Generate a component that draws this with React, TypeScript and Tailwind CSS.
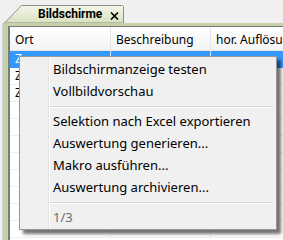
import React from "react";

const font = { fontFamily: '"Noto Sans", "Open Sans", sans-serif' };

const rows = ["Z", "Z", "Z", "", "", "", "", "", "", "", ""];

function Tab() {
  return (
    <div className="relative w-[120px] h-[18px]">
      <svg className="absolute inset-0" width="120" height="18" viewBox="0 0 120 18">
        <defs>
          <linearGradient id="tg" x1="0" y1="0" x2="0" y2="1">
            <stop offset="0" stopColor="#f3f6ea" />
            <stop offset="1" stopColor="#d8e2bf" />
          </linearGradient>
        </defs>
        <path d="M0.5 18 L17.5 0.5 L118.5 0.5 L119.5 1.5 L119.5 18 Z" fill="url(#tg)" stroke="#8f8f8f" strokeWidth="1" />
      </svg>
      <div className="relative flex items-center h-full pl-[34px]">
        <span
          className="w-[72px] text-[12px] font-bold text-black leading-none whitespace-nowrap"
          style={{ fontFamily: 'Roboto, "Noto Sans", sans-serif' }}
        >
          Bildschirme
        </span>
        <svg width="9" height="8" viewBox="0 0 9 8" className="mt-[3px]">
          <path d="M1 0.5 L8 7.5 M8 0.5 L1 7.5" stroke="#000" strokeWidth="1.6" />
        </svg>
      </div>
    </div>
  );
}

function MenuItem({ label, gray }: { label: string; gray?: boolean }) {
  return (
    <div className={`h-[22px] flex items-center pl-[3px] text-[13px] whitespace-nowrap ${gray ? "text-[#6d6d6d]" : "text-black"}`}>
      {label}
    </div>
  );
}

function Sep() {
  return (
    <div className="h-[8px] flex flex-col justify-center mr-[3px]">
      <div className="h-px bg-[#d7d7d7]" />
      <div className="h-px bg-white" />
    </div>
  );
}

export default function App() {
  return (
    <div className="relative w-[283px] h-[240px] bg-[#f0f0f0] overflow-hidden" style={font}>
      <div className="h-[23px] flex items-end pl-[4px]">
        <Tab />
      </div>
      <div className="flex h-[217px]">
        <div className="w-[2px]" />
        <div className="w-px bg-[#cdd3e4]" />
        <div className="flex-1 min-w-0 bg-[#c6d3a6] pt-[3px] pl-[5px] flex flex-col">
          <div className="flex-1 bg-white border-t border-l-2 border-[#7a7a7a] flex flex-col">
            <div className="h-[24px] flex border-b border-[#e5e5e5] bg-gradient-to-b from-white to-[#f4f4f4] text-[12px] text-black">
              <div className="w-[101px] shrink-0 border-r border-[#e5e5e5] pl-[5px] pt-[3px] flex items-center">Ort</div>
              <div className="w-[100px] shrink-0 border-r border-[#e5e5e5] pl-[5px] pt-[3px] flex items-center">Beschreibung</div>
              <div className="pl-[5px] pt-[3px] flex items-center whitespace-nowrap">hor. Auflösung</div>
            </div>
            {rows.map((r, i) => (
              <div
                key={i}
                className={`h-[17px] flex border-b text-[12px] ${
                  i === 0 ? "bg-[#3399ff] text-white border-[#3399ff]" : "text-black border-[#efefef]"
                }`}
              >
                <div className={`w-[101px] shrink-0 border-r pl-[5px] flex items-center ${i === 0 ? "border-[#cfe4ff]" : "border-[#efefef]"}`}>{r}</div>
                <div className={`w-[100px] shrink-0 border-r ${i === 0 ? "border-[#cfe4ff]" : "border-[#efefef]"}`} />
                <div className="flex-1" />
              </div>
            ))}
          </div>
        </div>
      </div>

      <div className="absolute left-[19px] top-[56px] w-[258px] border border-[#979797] bg-[#f0f0f0] shadow-[4px_4px_3px_rgba(0,0,0,0.55)] flex pt-[2px]">
        <div className="w-[29px] border-r border-[#e2e3e3]" />
        <div className="w-px bg-white" />
        <div className="flex-1 flex flex-col">
          <MenuItem label="Bildschirmanzeige testen" />
          <MenuItem label="Vollbildvorschau" />
          <Sep />
          <MenuItem label="Selektion nach Excel exportieren" />
          <MenuItem label="Auswertung generieren..." />
          <MenuItem label="Makro ausführen..." />
          <MenuItem label="Auswertung archivieren..." />
          <Sep />
          <MenuItem label="1/3" gray />
        </div>
      </div>
    </div>
  );
}
